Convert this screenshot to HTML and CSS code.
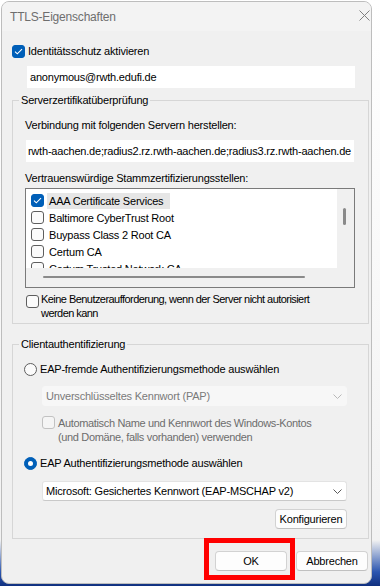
FILE: index.html
```html
<!DOCTYPE html>
<html lang="de">
<head>
<meta charset="utf-8">
<title>TTLS-Eigenschaften</title>
<link rel="stylesheet" href="styles.css">
</head>
<body>
<div class="window">
  <div class="titlebar">
    <span class="title">TTLS-Eigenschaften</span>
    <svg class="close" width="11" height="11" viewBox="0 0 11 11"><path d="M0.5 0.5L10.5 10.5M10.5 0.5L0.5 10.5" stroke="#808080" stroke-width="1" fill="none"/></svg>
  </div>
  <div class="content">
    <div class="check-row identity">
      <span class="cb checked"><svg width="9" height="7" viewBox="0 0 9 7"><path d="M1 3.6L3.3 5.8L8 1.2" stroke="#fff" stroke-width="1.1" fill="none"/></svg></span>
      <span>Identitätsschutz aktivieren</span>
    </div>
    <div class="field identity-field">anonymous@rwth.edufi.de</div>

    <div class="group server-group">
      <div class="group-title">Serverzertifikatüberprüfung</div>
      <div class="label first-label">Verbindung mit folgenden Servern herstellen:</div>
      <div class="field servers-field"><span>rwth-aachen.de;radius2.rz.rwth-aachen.de;radius3.rz.rwth-aachen.de</span></div>
      <div class="label second-label">Vertrauenswürdige Stammzertifizierungsstellen:</div>
      <div class="listbox">
        <div class="list-items">
          <div class="item"><span class="cb checked"><svg width="9" height="7" viewBox="0 0 9 7"><path d="M1 3.6L3.3 5.8L8 1.2" stroke="#fff" stroke-width="1.1" fill="none"/></svg></span><span class="item-text selected">AAA Certificate Services</span></div>
          <div class="item"><span class="cb"></span><span class="item-text">Baltimore CyberTrust Root</span></div>
          <div class="item"><span class="cb"></span><span class="item-text">Buypass Class 2 Root CA</span></div>
          <div class="item"><span class="cb"></span><span class="item-text">Certum CA</span></div>
          <div class="item"><span class="cb"></span><span class="item-text">Certum Trusted Network CA</span></div>
        </div>
        <div class="vscroll"><div class="vthumb"></div></div>
        <div class="hscroll"><div class="hthumb"></div></div>
        <div class="scroll-corner"></div>
      </div>
      <div class="check-row prompt-row">
        <span class="cb"></span>
        <span class="multi">Keine Benutzeraufforderung, wenn der Server nicht autorisiert<br>werden kann</span>
      </div>
    </div>

    <div class="group client-group">
      <div class="group-title">Clientauthentifizierung</div>
      <div class="radio-row first-radio"><span class="radio"></span><span>EAP-fremde Authentifizierungsmethode auswählen</span></div>
      <div class="select disabled"><span>Unverschlüsseltes Kennwort (PAP)</span><svg width="9" height="5" viewBox="0 0 9 5"><path d="M0.5 0.5L4.5 4.5L8.5 0.5" stroke="#b8b8b8" stroke-width="1" fill="none"/></svg></div>
      <div class="check-row disabled-row">
        <span class="cb disabled"></span>
        <span class="multi">Automatisch Name und Kennwort des Windows-Kontos<br>(und Domäne, falls vorhanden) verwenden</span>
      </div>
      <div class="radio-row second-radio"><span class="radio checked"></span><span>EAP Authentifizierungsmethode auswählen</span></div>
      <div class="select active"><span>Microsoft: Gesichertes Kennwort (EAP-MSCHAP v2)</span><svg width="9" height="5" viewBox="0 0 9 5"><path d="M0.5 0.5L4.5 4.5L8.5 0.5" stroke="#5a5a5a" stroke-width="1" fill="none"/></svg></div>
      <div class="button-row"><button class="btn" type="button">Konfigurieren</button></div>
    </div>

    <div class="footer">
      <div class="ok-wrap"><button class="btn" type="button">OK</button><span class="annotation"></span></div>
      <button class="btn" type="button">Abbrechen</button>
    </div>
  </div>
</div>
</body>
</html>
```
FILE: styles.css
```css
* { box-sizing: border-box; }
html, body { margin: 0; padding: 0; }
body {
  width: 380px;
  height: 586px;
  overflow: hidden;
  background: linear-gradient(180deg, #ffffff 0, #f2f2f2 540px, #2c56b0 572px, #10307f 586px);
  font-family: "Liberation Sans", Arial, sans-serif;
  font-size: 11px;
  letter-spacing: -0.2px;
  color: #000;
}
.window {
  margin: 1px 0 0 1px;
  width: 371px;
  height: 583px;
  border: 1px solid #bdbdbd;
  border-radius: 8px;
  background: #f0f0f0;
  overflow: hidden;
  display: flex;
  flex-direction: column;
}
.titlebar {
  flex: none;
  height: 29px;
  display: flex;
  align-items: center;
  justify-content: space-between;
  padding-left: 8px;
  background: #f3f3f3;
  color: #6e6e6e;
  font-size: 12px;
}
.close { margin-right: 1px; margin-bottom: 3px; }
.content { flex: 1; padding-left: 10px; }

.check-row { display: flex; align-items: center; line-height: 14px; }
.cb {
  flex: none;
  width: 13px;
  height: 13px;
  border: 1px solid #5e5e5e;
  border-radius: 3px;
  background: #fbfbfb;
  display: flex;
  align-items: center;
  justify-content: center;
}
.cb.checked { background: #005fb8; border-color: #005fb8; }
.cb.disabled { border-color: #c2c2c2; background: #f5f5f5; }

.identity { margin-top: 13px; gap: 3px; }

.field {
  height: 22px;
  background: #fff;
  display: flex;
  align-items: center;
  white-space: nowrap;
  overflow: hidden;
}
.identity-field { margin: 8px 0 0 15px; width: 328px; padding-left: 3px; }

.group { border: 1px solid #d6d6d6; width: 357px; }
.group-title {
  width: max-content;
  padding: 0 2px;
  background: #f0f0f0;
  line-height: 14px;
}
.server-group { margin-top: 12px; height: 224px; padding-left: 12px; }
.server-group .group-title { margin: -8px 0 0 -6px; }
.label { line-height: 14px; }
.first-label { margin-top: 11px; }
.servers-field { margin: 8px 0 0 1px; width: 328px; justify-content: flex-end; padding-right: 3px; }
.second-label { margin-top: 9px; }

.listbox {
  margin-top: 3px;
  width: 330px;
  height: 100px;
  border: 1px solid #7a7a7a;
  background: #f0f0f0;
  display: grid;
  grid-template-columns: 311px 17px;
  grid-template-rows: 79px 19px;
}
.list-items { background: #fff; overflow: hidden; padding-top: 3px; }
.item { display: flex; align-items: center; height: 17px; padding-left: 5px; white-space: nowrap; }
.item-text { margin-left: 3px; padding: 0 7px 0 2px; line-height: 16px; }
.item-text.selected { background: #e6e6e6; }
.vscroll { padding: 19px 0 0 6px; }
.vthumb { width: 3px; height: 17px; background: #8a8a8a; border-radius: 2px; }
.hscroll { padding: 8px 0 0 17px; }
.hthumb { width: 262px; height: 2px; background: #8a8a8a; border-radius: 1px; }

.prompt-row { margin: 5px 0 0 1px; align-items: flex-start; }
.prompt-row .cb { margin-top: 2px; }
.prompt-row .multi { margin-left: 2px; line-height: 13.5px; letter-spacing: -0.55px; }

.client-group { margin-top: 20px; height: 195px; padding-left: 11px; }
.client-group .group-title { margin: -8px 0 0 -5px; }
.radio-row { display: flex; align-items: center; gap: 3px; line-height: 14px; }
.radio {
  flex: none;
  width: 13px;
  height: 13px;
  border-radius: 50%;
  border: 1px solid #5e5e5e;
  background: #fbfbfb;
  display: flex;
  align-items: center;
  justify-content: center;
}
.radio.checked { background: #005fb8; border-color: #005fb8; }
.radio.checked::after { content: ""; width: 5px; height: 5px; border-radius: 50%; background: #fff; }
.first-radio { margin-top: 11px; }
.select {
  margin: 10px 0 0 18px;
  width: 305px;
  height: 20px;
  display: flex;
  align-items: center;
  justify-content: space-between;
  padding: 0 4px 0 3px;
  border: 1px solid #e3e3e3;
  border-bottom-color: #c9c9c9;
  border-radius: 3px;
  background: #fff;
  white-space: nowrap;
}
.select.disabled { background: #f7f7f7; border-color: #f7f7f7; color: #7a7a7a; }
.select.active { margin-top: 11px; }
.disabled-row { margin: 10px 0 0 18px; align-items: flex-start; color: #6d6d6d; }
.disabled-row .multi { margin-left: 3px; line-height: 14px; letter-spacing: -0.35px; }
.second-radio { margin-top: 12px; }
.button-row { margin: 8px 0 0 18px; width: 305px; display: flex; justify-content: flex-end; }
.btn {
  width: 72px;
  height: 20px;
  padding: 0;
  font: inherit;
  letter-spacing: inherit;
  color: #000;
  background: #fdfdfd;
  border: 1px solid #d2d2d2;
  border-bottom-color: #c0c0c0;
  border-radius: 4px;
}
.footer { display: flex; justify-content: flex-end; gap: 9px; margin-top: 12px; padding-right: 3px; }
.ok-wrap { position: relative; display: flex; }
.annotation {
  position: absolute;
  left: -11px;
  top: -13px;
  width: 91px;
  height: 42px;
  border: 5px solid #f00;
}
```
